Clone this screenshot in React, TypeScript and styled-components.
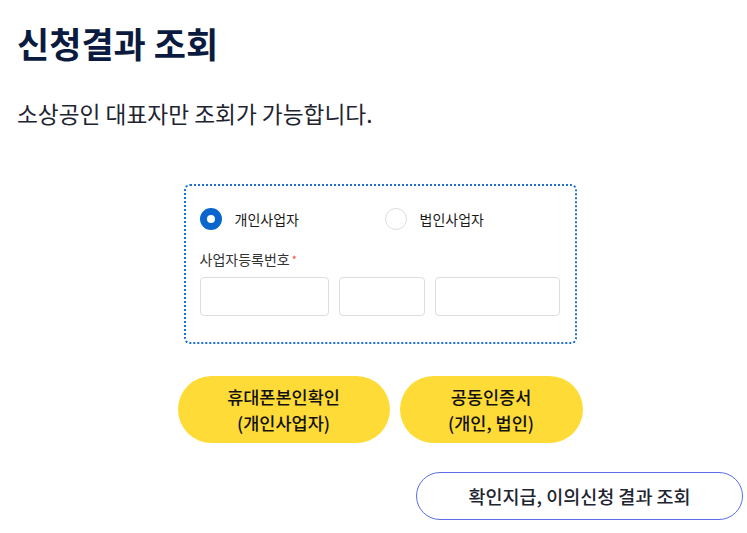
import styled, { createGlobalStyle } from 'styled-components';

const GlobalStyle = createGlobalStyle`
  body {
    margin: 0;
    background: #fff;
    font-family: 'Noto Sans CJK KR', 'Noto Sans', sans-serif;
    color: #222;
  }
`;

const mediumFont = `'Noto Sans CJK KR Medium', 'Noto Sans CJK KR', sans-serif`;

const Page = styled.div`
  padding: 18px 4px 0 17px;
`;

const Title = styled.h2`
  margin: 0;
  font-size: 35px;
  line-height: 50px;
  font-weight: 700;
  color: #0b1b3f;
`;

const Desc = styled.p`
  margin: 31px 0 0;
  font-size: 22.7px;
  line-height: 30px;
  font-weight: 400;
  color: #1e2430;
`;

const Center = styled.div`
  display: flex;
  flex-direction: column;
  align-items: center;
`;

const FormBox = styled.div`
  width: 393px;
  height: 160px;
  box-sizing: border-box;
  margin-top: 55px;
  border: 2px dotted #1a6fd0;
  border-radius: 6px;
  padding: 22px 16px 0 14px;
`;

const RadioRow = styled.div`
  display: grid;
  grid-template-columns: 185px 1fr;
`;

const RadioLabel = styled.label`
  display: flex;
  align-items: center;
  gap: 13px;
  font-size: 14px;
  color: #1a1a1a;
`;

const RadioDot = styled.span<{ $checked?: boolean }>`
  width: 22px;
  height: 22px;
  box-sizing: border-box;
  border-radius: 50%;
  border: ${(p) => (p.$checked ? '7px solid #0a66cc' : '1px solid #ddd')};
  background: #fff;
`;

const FieldLabel = styled.div`
  margin-top: 19px;
  font-size: 14px;
  line-height: 20px;
  color: #333;
`;

const Required = styled.span`
  color: #f44d4d;
  font-size: 11px;
  vertical-align: top;
  margin-left: 2px;
`;

const InputRow = styled.div`
  display: grid;
  grid-template-columns: 129px 86px 125px;
  gap: 10px;
  margin-top: 8px;
`;

const Input = styled.input`
  height: 39px;
  box-sizing: border-box;
  border: 1px solid #ddd;
  border-radius: 4px;
  outline: none;
`;

const ButtonRow = styled.div`
  display: flex;
  gap: 10px;
  margin-top: 32px;
`;

const YellowButton = styled.button<{ $width: number }>`
  width: ${(p) => p.$width}px;
  height: 67px;
  border: none;
  border-radius: 34px;
  background: #fedb37;
  font-family: ${mediumFont};
  font-size: 17.5px;
  line-height: 26px;
  font-weight: 400;
  color: #111;
`;

const BottomRow = styled.div`
  display: flex;
  justify-content: flex-end;
  margin-top: 29px;
`;

const OutlineButton = styled.button`
  width: 327px;
  height: 48px;
  border: 1px solid #5a6ee8;
  border-radius: 24px;
  background: #fff;
  font-family: ${mediumFont};
  font-size: 18.5px;
  font-weight: 400;
  color: #1e2430;
`;

export default function App() {
  return (
    <>
      <GlobalStyle />
      <Page>
        <Title>신청결과 조회</Title>
        <Desc>소상공인 대표자만 조회가 가능합니다.</Desc>
        <Center>
          <FormBox>
            <RadioRow>
              <RadioLabel>
                <RadioDot $checked />
                개인사업자
              </RadioLabel>
              <RadioLabel>
                <RadioDot />
                법인사업자
              </RadioLabel>
            </RadioRow>
            <FieldLabel>
              사업자등록번호<Required>*</Required>
            </FieldLabel>
            <InputRow>
              <Input />
              <Input />
              <Input />
            </InputRow>
          </FormBox>
          <ButtonRow>
            <YellowButton $width={212}>
              휴대폰본인확인
              <br />
              (개인사업자)
            </YellowButton>
            <YellowButton $width={183}>
              공동인증서
              <br />
              (개인, 법인)
            </YellowButton>
          </ButtonRow>
        </Center>
        <BottomRow>
          <OutlineButton>확인지급, 이의신청 결과 조회</OutlineButton>
        </BottomRow>
      </Page>
    </>
  );
}
